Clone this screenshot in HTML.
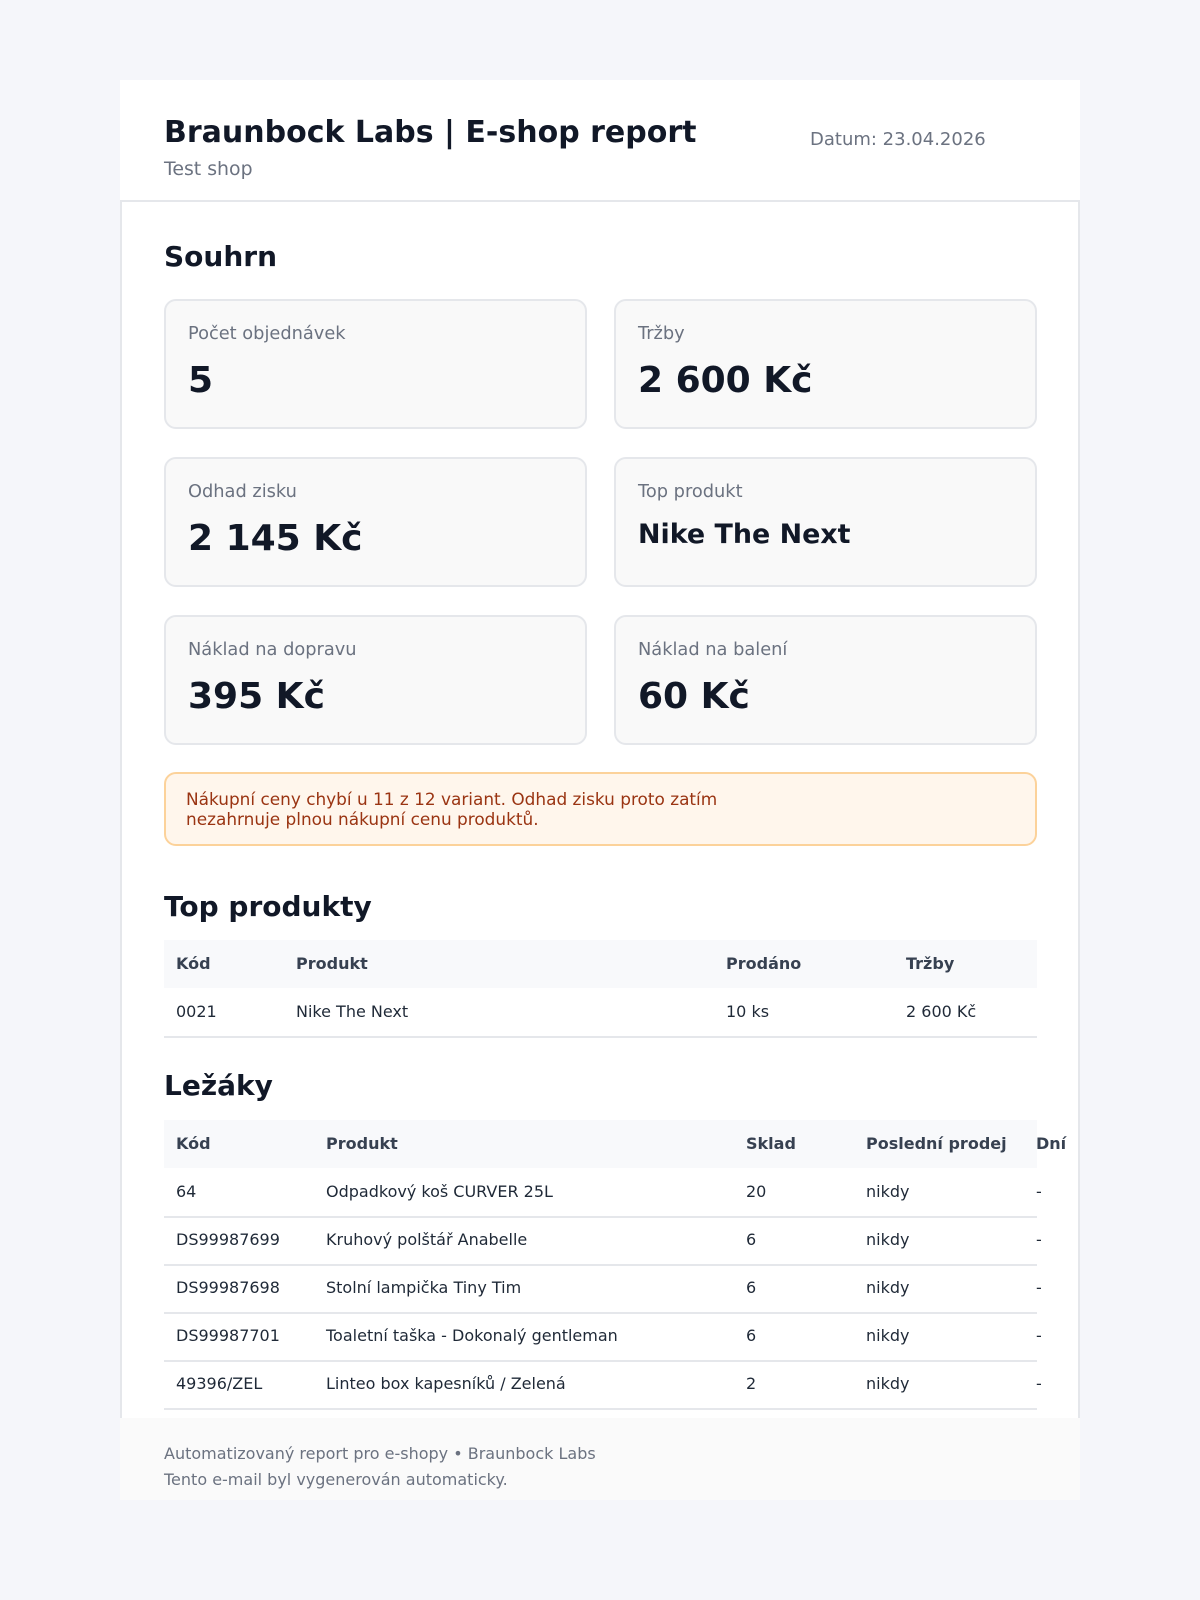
<!DOCTYPE html>
<html><head><meta charset="utf-8"><style>
*{margin:0;padding:0;box-sizing:border-box}
html,body{width:1200px;height:1600px;overflow:hidden;background:#f5f6fa}
body{font-family:"DejaVu Sans","Liberation Sans",sans-serif;color:#111827;position:relative}
.a{position:absolute;white-space:nowrap}
.hdr{position:absolute;left:120px;top:80px;width:960px;height:122px;background:#fff;border-bottom:2px solid #e5e7eb}
.body{position:absolute;left:120px;top:202px;width:960px;height:1216px;background:#fff;border-left:2px solid #e5e7eb;border-right:2px solid #e5e7eb}
.foot{position:absolute;left:120px;top:1418px;width:960px;height:82px;background:#fafafa}
.card{position:absolute;width:423px;height:130px;background:#f9f9f9;border:2px solid #e5e7eb;border-radius:12px}
.card .l{position:absolute;left:22px;top:22px;font-size:17.8px;color:#6b7280}
.card .v{position:absolute;left:22px;top:59px;font-size:36px;font-weight:bold;color:#111827}
h2{position:absolute;font-size:28px;font-weight:bold;color:#111827}
.th{position:absolute;left:164px;width:873px;height:48px;background:#f8f9fb}
.row{position:absolute;left:164px;width:873px;height:2px;background:#e5e7eb}
.t{position:absolute;font-size:16px;color:#1f2937;white-space:nowrap}
.b{font-weight:bold;color:#374151}
</style></head><body>
<div class="hdr"></div>
<div class="body"></div>
<div class="foot"></div>
<div class="a" style="left:164px;top:115px;font-size:30px;font-weight:bold;color:#111827">Braunbock Labs | E-shop report</div>
<div class="a" style="left:164px;top:158px;font-size:18.9px;color:#6b7280">Test shop</div>
<div class="a" style="left:810px;top:129px;font-size:18px;color:#6b7280">Datum: 23.04.2026</div>

<h2 style="left:164px;top:240px">Souhrn</h2>
<div class="card" style="left:164px;top:299px"><div class="l">Počet objednávek</div><div class="v">5</div></div>
<div class="card" style="left:614px;top:299px"><div class="l">Tržby</div><div class="v">2 600 Kč</div></div>
<div class="card" style="left:164px;top:457px"><div class="l">Odhad zisku</div><div class="v">2 145 Kč</div></div>
<div class="card" style="left:614px;top:457px"><div class="l">Top produkt</div><div class="v" style="font-size:26.9px;top:60px">Nike The Next</div></div>
<div class="card" style="left:164px;top:615px"><div class="l">Náklad na dopravu</div><div class="v">395 Kč</div></div>
<div class="card" style="left:614px;top:615px"><div class="l">Náklad na balení</div><div class="v">60 Kč</div></div>

<div style="position:absolute;left:164px;top:772px;width:873px;height:74px;background:#fff6ec;border:2px solid #fcd29a;border-radius:12px"></div>
<div class="a" style="left:186px;top:789px;font-size:16.9px;color:#9a3412;line-height:20px">Nákupní ceny chybí u 11 z 12 variant. Odhad zisku proto zatím<br>nezahrnuje plnou nákupní cenu produktů.</div>

<h2 style="left:164px;top:890px">Top produkty</h2>
<div class="th" style="top:940px"></div>
<div class="t b" style="left:176px;top:954px">Kód</div>
<div class="t b" style="left:296px;top:954px">Produkt</div>
<div class="t b" style="left:726px;top:954px">Prodáno</div>
<div class="t b" style="left:906px;top:954px">Tržby</div>
<div class="t" style="left:176px;top:1002px">0021</div>
<div class="t" style="left:296px;top:1002px">Nike The Next</div>
<div class="t" style="left:726px;top:1002px">10 ks</div>
<div class="t" style="left:906px;top:1002px">2 600 Kč</div>
<div class="row" style="top:1036px"></div>

<h2 style="left:164px;top:1069px">Ležáky</h2>
<div class="th" style="top:1120px"></div>
<div class="t b" style="left:176px;top:1134px">Kód</div>
<div class="t b" style="left:326px;top:1134px">Produkt</div>
<div class="t b" style="left:746px;top:1134px">Sklad</div>
<div class="t b" style="left:866px;top:1134px">Poslední prodej</div>
<div class="t b" style="left:1036px;top:1134px">Dní</div>

<div class="t" style="left:176px;top:1182px">64</div><div class="t" style="left:326px;top:1182px">Odpadkový koš CURVER 25L</div><div class="t" style="left:746px;top:1182px">20</div><div class="t" style="left:866px;top:1182px">nikdy</div><div class="t" style="left:1036px;top:1182px">-</div>
<div class="row" style="top:1216px"></div>
<div class="t" style="left:176px;top:1230px">DS99987699</div><div class="t" style="left:326px;top:1230px">Kruhový polštář Anabelle</div><div class="t" style="left:746px;top:1230px">6</div><div class="t" style="left:866px;top:1230px">nikdy</div><div class="t" style="left:1036px;top:1230px">-</div>
<div class="row" style="top:1264px"></div>
<div class="t" style="left:176px;top:1278px">DS99987698</div><div class="t" style="left:326px;top:1278px">Stolní lampička Tiny Tim</div><div class="t" style="left:746px;top:1278px">6</div><div class="t" style="left:866px;top:1278px">nikdy</div><div class="t" style="left:1036px;top:1278px">-</div>
<div class="row" style="top:1312px"></div>
<div class="t" style="left:176px;top:1326px">DS99987701</div><div class="t" style="left:326px;top:1326px">Toaletní taška - Dokonalý gentleman</div><div class="t" style="left:746px;top:1326px">6</div><div class="t" style="left:866px;top:1326px">nikdy</div><div class="t" style="left:1036px;top:1326px">-</div>
<div class="row" style="top:1360px"></div>
<div class="t" style="left:176px;top:1374px">49396/ZEL</div><div class="t" style="left:326px;top:1374px">Linteo box kapesníků / Zelená</div><div class="t" style="left:746px;top:1374px">2</div><div class="t" style="left:866px;top:1374px">nikdy</div><div class="t" style="left:1036px;top:1374px">-</div>
<div class="row" style="top:1408px"></div>

<div class="a" style="left:164px;top:1444px;font-size:16px;color:#6b7280">Automatizovaný report pro e-shopy • Braunbock Labs</div>
<div class="a" style="left:164px;top:1470px;font-size:16px;color:#6b7280">Tento e-mail byl vygenerován automaticky.</div>
</body></html>
